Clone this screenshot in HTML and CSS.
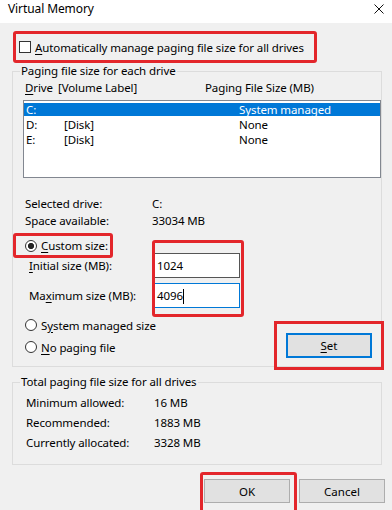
FILE: index.html
```html
<!DOCTYPE html>
<html lang="en">
<head>
    <meta charset="UTF-8">
    <meta name="viewport" content="width=device-width, initial-scale=1.0">
    <title>Virtual Memory</title>
    <link rel="stylesheet" href="styles.css">
</head>
<body>
    <div class="titlebar">
        <span class="title">Virtual Memory</span>
        <svg class="close" width="10" height="10" viewBox="0 0 10 10">
            <path d="M0.5 0.5L9.5 9.5M9.5 0.5L0.5 9.5" stroke="#111" stroke-width="1"/>
        </svg>
    </div>

    <div class="content">
        <!-- Automatic checkbox (highlighted) -->
        <div class="auto">
            <span class="check"></span>
            <span><u>A</u>utomatically manage paging file size for all drives</span>
        </div>

        <fieldset class="group drives">
            <legend>Paging file size for each drive</legend>
            <div class="list-head">
                <span class="head-drive"><u>D</u>rive</span>
                <span class="head-label">[Volume Label]</span>
                <span>Paging File Size (MB)</span>
            </div>
            <div class="listbox">
                <div class="row sel">
                    <span class="col-drive">C:</span>
                    <span class="col-label"></span>
                    <span>System managed</span>
                </div>
                <div class="row">
                    <span class="col-drive">D:</span>
                    <span class="col-label">[Disk]</span>
                    <span>None</span>
                </div>
                <div class="row">
                    <span class="col-drive">E:</span>
                    <span class="col-label">[Disk]</span>
                    <span>None</span>
                </div>
            </div>

            <div class="info">
                <div class="pair"><span class="key">Selected drive:</span><span>C:</span></div>
                <div class="pair"><span class="key">Space available:</span><span>33034 MB</span></div>
            </div>

            <div class="radio-row custom">
                <span class="radio on"></span>
                <span><u>C</u>ustom size:</span>
            </div>

            <div class="sizes">
                <div class="size-labels">
                    <span><u>I</u>nitial size (MB):</span>
                    <span>Ma<u>x</u>imum size (MB):</span>
                </div>
                <div class="size-inputs">
                    <div class="field">1024</div>
                    <div class="field focus">4096<span class="caret"></span></div>
                    <div class="mark"></div>
                </div>
            </div>

            <div class="bottom-row">
                <div class="radios">
                    <div class="radio-row">
                        <span class="radio"></span>
                        <span>S<u>y</u>stem managed size</span>
                    </div>
                    <div class="radio-row">
                        <span class="radio"></span>
                        <span><u>N</u>o paging file</span>
                    </div>
                </div>
                <button class="btn set"><u>S</u>et</button>
            </div>
        </fieldset>

        <fieldset class="group totals">
            <legend>Total paging file size for all drives</legend>
            <div class="totals-rows">
                <div class="pair"><span class="key">Minimum allowed:</span><span>16 MB</span></div>
                <div class="pair"><span class="key">Recommended:</span><span>1883 MB</span></div>
                <div class="pair"><span class="key">Currently allocated:</span><span>3328 MB</span></div>
            </div>
        </fieldset>

        <div class="actions">
            <div class="ok-mark"><button class="btn">OK</button></div>
            <button class="btn cancel">Cancel</button>
        </div>
    </div>
</body>
</html>
```

FILE: styles.css
```css
body {
    margin: 0;
    height: 510px;
    overflow: hidden;
    background: #f0f0f0;
    font-family: "Noto Sans", "Segoe UI", sans-serif;
    font-size: 11.5px;
    letter-spacing: -0.1px;
    color: #000;
}
u {
    text-decoration-thickness: 1px;
    text-underline-offset: 2px;
}
.titlebar {
    height: 23px;
    background: #fff;
    display: flex;
    justify-content: space-between;
    align-items: flex-start;
    padding: 1px 8px 0 8px;
    box-sizing: border-box;
}
.title {
    line-height: 16px;
    font-size: 12px;
}
.close {
    margin-top: 3px;
}
.content {
    padding-top: 8px;
}
.auto {
    display: flex;
    align-items: center;
    gap: 4px;
    margin-left: 13px;
    width: 304px;
    height: 32px;
    box-sizing: border-box;
    border: 3px solid #e3262b;
    border-radius: 3px;
    padding-left: 3px;
}
.check {
    width: 12px;
    height: 12px;
    box-sizing: border-box;
    border: 1px solid #333;
    background: #fff;
}
.group {
    margin: 1px 0 0 12px;
    width: 370px;
    box-sizing: border-box;
    border: 1px solid #dcdcdc;
    padding: 0 0 8px 10px;
}
.group legend {
    padding: 0 1px;
    margin-left: -3px;
    line-height: 14px;
}
.list-head {
    display: flex;
    line-height: 16px;
    margin: 2px 0 4px 0;
    padding-left: 2px;
}
.head-drive {
    width: 33px;
}
.head-label {
    width: 147px;
}
.listbox {
    height: 78px;
    box-sizing: border-box;
    border: 1px solid #828790;
    background: #fff;
    padding-top: 1px;
}
.row {
    display: flex;
    height: 15px;
    box-sizing: border-box;
    line-height: 13px;
    border-top: 1px solid transparent;
    border-bottom: 1px solid transparent;
    background-clip: padding-box;
    padding-left: 2px;
}
.row.sel {
    background-color: #0078d7;
    color: #fff;
}
.col-drive {
    width: 38px;
}
.col-label {
    width: 175px;
}
.info {
    margin-top: 17px;
}
.pair {
    display: flex;
    line-height: 17px;
    padding-left: 2px;
}
.pair .key {
    width: 127px;
}
.radio-row {
    display: flex;
    align-items: center;
    gap: 4px;
    height: 18px;
}
.radio {
    width: 12px;
    height: 12px;
    box-sizing: border-box;
    border: 1px solid #333;
    border-radius: 50%;
    background: #fff;
}
.radio.on {
    background: radial-gradient(circle, #222 0 2.8px, #fff 3.3px);
}
.custom {
    margin: 4px 0 -5px -10px;
    width: 100px;
    height: 25px;
    box-sizing: border-box;
    border: 3px solid #e3262b;
    border-radius: 3px;
    padding-left: 9px;
}
.sizes {
    display: flex;
}
.size-labels {
    width: 131px;
    padding-left: 6px;
    box-sizing: border-box;
    display: flex;
    flex-direction: column;
    gap: 5px;
    line-height: 25px;
}
.size-inputs {
    position: relative;
    width: 86px;
    display: flex;
    flex-direction: column;
    gap: 5px;
}
.field {
    height: 25px;
    box-sizing: border-box;
    border: 1px solid #555;
    background: #fff;
    padding-left: 2px;
    line-height: 23px;
}
.field.focus {
    border-color: #0078d7;
}
.caret {
    display: inline-block;
    width: 1px;
    height: 15px;
    background: #000;
    vertical-align: middle;
}
/* red annotation over both size boxes */
.mark {
    position: absolute;
    top: -13px;
    left: -2px;
    right: -4px;
    bottom: -9px;
    border: 3px solid #e3262b;
    border-radius: 3px;
    pointer-events: none;
}
.bottom-row {
    display: flex;
    justify-content: space-between;
    align-items: flex-start;
    margin-top: 8px;
}
.radios {
    display: flex;
    flex-direction: column;
    gap: 4px;
    padding-left: 2px;
}
.btn {
    width: 86px;
    height: 24px;
    padding: 0;
    background: #e1e1e1;
    border: 1px solid #adadad;
    font: inherit;
    color: #000;
}
.set {
    height: 25px;
    margin: 17px 9px 0 0;
    border: 2px solid #0078d7;
    outline: 3px solid #e3262b;
    outline-offset: 9px;
}
.totals {
    margin-top: 8px;
    padding-bottom: 11px;
}
.totals-rows {
    margin-top: 4px;
    padding-left: 1px;
}
.totals-rows .pair {
    line-height: 20px;
}
.totals-rows .pair .key {
    width: 128px;
}
.actions {
    display: flex;
    justify-content: flex-end;
    align-items: flex-start;
    gap: 2px;
    margin: 7px 7px 0 0;
}
.ok-mark {
    border: 3px solid #e3262b;
    border-radius: 3px;
    padding: 4px 4px 10px 1px;
}
.cancel {
    margin-top: 7px;
}
```
